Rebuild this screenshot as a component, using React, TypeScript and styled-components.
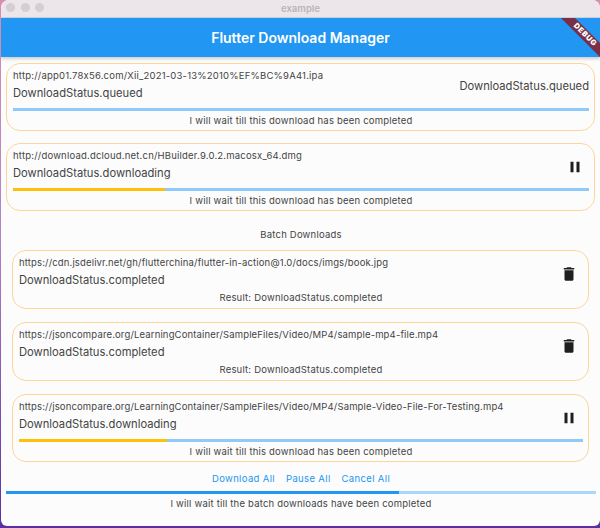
import React from 'react';
import styled, { createGlobalStyle } from 'styled-components';

const GlobalStyle = createGlobalStyle`
  html, body {
    margin: 0;
    padding: 0;
    width: 600px;
    height: 528px;
    overflow: hidden;
    background: linear-gradient(180deg, #d58fb0 0%, #b184c4 45%, #5a2ea6 100%);
  }
  * { box-sizing: border-box; }
`;

const Window = styled.div`
  width: 599px;
  height: 526px;
  margin-left: 1px;
  background: #fcfcfc;
  border-radius: 8px 8px 6px 6px;
  overflow: hidden;
  font-family: Inter, "Noto Sans", sans-serif;
  color: #444;
  display: flex;
  flex-direction: column;
`;

const TitleBar = styled.div`
  height: 18px;
  flex: none;
  background: #ece6ea;
  border-bottom: 1px solid #c9d3de;
  position: relative;
  display: flex;
  align-items: center;
  justify-content: center;
  padding-bottom: 1px;
  font-size: 9.5px;
  font-weight: 600;
  color: #b9b5b8;
`;

const Lights = styled.div`
  position: absolute;
  left: 5px;
  top: 3px;
  display: flex;
  gap: 5.5px;
`;

const Light = styled.span`
  width: 9px;
  height: 9px;
  border-radius: 50%;
  background: #d3ced2;
`;

const AppBar = styled.div`
  height: 39px;
  flex: none;
  background: #2196f3;
  color: #fff;
  font-size: 14px;
  font-weight: 600;
  display: flex;
  align-items: center;
  justify-content: center;
  position: relative;
  overflow: hidden;
  box-shadow: 0 2px 3px rgba(0, 0, 0, 0.18);
  z-index: 1;
`;

const DebugBanner = styled.div`
  position: absolute;
  top: 11.5px;
  right: -20px;
  width: 70px;
  height: 10px;
  background: #7a2f47;
  color: #fff;
  font-size: 7.5px;
  font-weight: 900;
  line-height: 10px;
  text-align: center;
  letter-spacing: 0.6px;
  transform: rotate(45deg);
`;

const Body = styled.div`
  flex: 1;
  padding: 6px 4px 0 5px;
  display: flex;
  flex-direction: column;
`;

const Card = styled.div<{ $tall?: boolean }>`
  height: ${(p) => (p.$tall ? 59 : 68)}px;
  border: 1px solid #fdd598;
  border-radius: 14px;
  padding: 5px 5px 0 6px;
  position: relative;
  display: flex;
  flex-direction: column;
`;

const Url = styled.div<{ $tight?: boolean }>`
  font-size: 9.5px;
  letter-spacing: ${(p) => (p.$tight ? 0.15 : 0.2)}px;
  line-height: 13px;
  white-space: nowrap;
`;

const Status = styled.div`
  font-size: 11.2px;
  line-height: 14px;
  margin-top: 4px;
  white-space: nowrap;
`;

const SideStatus = styled.div`
  position: absolute;
  right: 5px;
  top: 15px;
  font-size: 11.2px;
  line-height: 14px;
`;

const IconSlot = styled.div`
  position: absolute;
  right: 9px;
  top: 13px;
  width: 20px;
  height: 20px;
  color: #1f1f1f;
  display: flex;
  align-items: center;
  justify-content: center;
`;

const Track = styled.div`
  height: 3px;
  flex: none;
  background: #90caf9;
`;

const Fill = styled.div<{ $color: string }>`
  height: 100%;
  background: ${(p) => p.$color};
`;

const BarGap = styled.div`
  margin-top: 8px;
`;

const Note = styled.div<{ $plain?: boolean }>`
  font-size: 9.5px;
  letter-spacing: 0.2px;
  line-height: 13px;
  margin-top: ${(p) => (p.$plain ? 4 : 3)}px;
  text-align: center;
  white-space: nowrap;
`;

const SectionTitle = styled.div`
  font-size: 9.5px;
  letter-spacing: 0.2px;
  line-height: 13px;
  text-align: center;
  margin: 17px 0 9px;
`;

const SingleList = styled.div`
  margin-right: 1px;
  display: flex;
  flex-direction: column;
  gap: 12px;
`;

const BatchList = styled.div`
  padding: 0 7px 0 6px;
  display: flex;
  flex-direction: column;
  gap: 13px;
`;

const Actions = styled.div`
  display: flex;
  justify-content: center;
  gap: 11px;
  margin-top: 10px;
  font-size: 9.5px;
  letter-spacing: 0.35px;
  line-height: 13px;
  color: #2196f3;
`;

const BatchBar = styled.div`
  margin-top: 6px;
  height: 3px;
  background: #a9d6fb;
`;

const PauseIcon = () => (
  <svg viewBox="0 0 24 24" width="18" height="18" fill="currentColor">
    <path d="M6 19h4V5H6v14zm8-14v14h4V5h-4z" />
  </svg>
);

const TrashIcon = () => (
  <svg viewBox="0 0 24 24" width="18" height="18" fill="currentColor">
    <path d="M6 19c0 1.1.9 2 2 2h8c1.1 0 2-.9 2-2V7H6v12zM19 4h-3.5l-1-1h-5l-1 1H5v2h14V4z" />
  </svg>
);

type Item = {
  url: string;
  status: string;
  progress?: number;
  note: string;
  icon?: 'pause' | 'trash';
  side?: boolean;
};

const singles: Item[] = [
  {
    url: 'http://app01.78x56.com/Xii_2021-03-13%2010%EF%BC%9A41.ipa',
    status: 'DownloadStatus.queued',
    progress: 0,
    note: 'I will wait till this download has been completed',
    side: true,
  },
  {
    url: 'http://download.dcloud.net.cn/HBuilder.9.0.2.macosx_64.dmg',
    status: 'DownloadStatus.downloading',
    progress: 26.4,
    note: 'I will wait till this download has been completed',
    icon: 'pause',
  },
];

const batch: Item[] = [
  {
    url: 'https://cdn.jsdelivr.net/gh/flutterchina/flutter-in-action@1.0/docs/imgs/book.jpg',
    status: 'DownloadStatus.completed',
    note: 'Result: DownloadStatus.completed',
    icon: 'trash',
  },
  {
    url: 'https://jsoncompare.org/LearningContainer/SampleFiles/Video/MP4/sample-mp4-file.mp4',
    status: 'DownloadStatus.completed',
    note: 'Result: DownloadStatus.completed',
    icon: 'trash',
  },
  {
    url: 'https://jsoncompare.org/LearningContainer/SampleFiles/Video/MP4/Sample-Video-File-For-Testing.mp4',
    status: 'DownloadStatus.downloading',
    progress: 26.3,
    note: 'I will wait till this download has been completed',
    icon: 'pause',
  },
];

const TaskCard = ({ item, tight }: { item: Item; tight?: boolean }) => (
  <Card $tall={item.progress === undefined}>
    <Url $tight={tight}>{item.url}</Url>
    <Status>{item.status}</Status>
    {item.side && <SideStatus>{item.status}</SideStatus>}
    {item.icon && <IconSlot>{item.icon === 'pause' ? <PauseIcon /> : <TrashIcon />}</IconSlot>}
    {item.progress !== undefined && (
      <BarGap>
        <Track>
          <Fill $color="#ffc107" style={{ width: `${item.progress}%` }} />
        </Track>
      </BarGap>
    )}
    <Note $plain={item.progress === undefined}>{item.note}</Note>
  </Card>
);

export default function App() {
  return (
    <>
      <GlobalStyle />
      <Window>
        <TitleBar>
          <Lights>
            <Light />
            <Light />
            <Light />
          </Lights>
          example
        </TitleBar>
        <AppBar>
          Flutter Download Manager
          <DebugBanner>DEBUG</DebugBanner>
        </AppBar>
        <Body>
          <SingleList>
            {singles.map((item) => (
              <TaskCard key={item.url} item={item} />
            ))}
          </SingleList>
          <SectionTitle>Batch Downloads</SectionTitle>
          <BatchList>
            {batch.map((item) => (
              <TaskCard key={item.url} item={item} tight />
            ))}
          </BatchList>
          <Actions>
            <span>Download All</span>
            <span>Pause All</span>
            <span>Cancel All</span>
          </Actions>
          <BatchBar>
            <Fill $color="#2196f3" style={{ width: '66.6%' }} />
          </BatchBar>
          <Note>I will wait till the batch downloads have been completed</Note>
        </Body>
      </Window>
    </>
  );
}
